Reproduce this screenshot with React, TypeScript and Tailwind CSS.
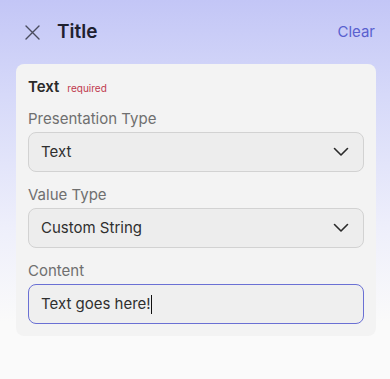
import React from 'react';

const Chevron = () => (
  <svg width="16" height="16" viewBox="0 0 16 16" fill="none" className="text-[#2a2a2a]">
    <path d="M1.5 4.5 8 11l6.5-6.5" stroke="currentColor" strokeWidth="1.6" strokeLinecap="round" strokeLinejoin="round" />
  </svg>
);

const Field: React.FC<{ label: string; children: React.ReactNode }> = ({ label, children }) => (
  <div className="mt-3">
    <div className="h-5 leading-5 text-[15px] text-[#6f6f6f] mb-1 pt-px">{label}</div>
    {children}
  </div>
);

const Select: React.FC<{ value: string }> = ({ value }) => (
  <div className="h-10 rounded-lg border border-[#d2d2d2] bg-[#ededed] flex items-center justify-between pl-3 pr-3.5">
    <span className="text-[15px] text-[#2f2f2f]">{value}</span>
    <Chevron />
  </div>
);

export default function App() {
  return (
    <div
      className="w-[390px] h-[379px] bg-[linear-gradient(180deg,#c3c6f6_0%,#d6d9f9_25%,#eeeffb_60%,#fafafa_85%)] overflow-hidden"
      style={{ fontFamily: 'Inter, "Noto Sans", sans-serif' }}
    >
      <header className="h-16 flex items-center justify-between pl-5 pr-[15px]">
        <div className="flex items-center">
          <div className="w-6 h-6 flex items-center justify-center text-[#4a4c5e]">
            <svg width="15" height="15" viewBox="0 0 15 15" fill="none">
              <path d="M1 1l13 13M14 1 1 14" stroke="currentColor" strokeWidth="1.4" strokeLinecap="round" />
            </svg>
          </div>
          <h1 className="ml-[13px] text-[19px] font-semibold text-[#1f2130]">Title</h1>
        </div>
        <button className="text-[15px] text-[#5a61cf]">Clear</button>
      </header>

      <div className="ml-4 mr-[14px] rounded-lg bg-[#f3f3f3] p-3">
        <div className="h-5 flex items-baseline gap-2">
          <span className="text-[15px] font-semibold text-[#2a2a2a]">Text</span>
          <span className="text-[10px] text-[#c0394d]">required</span>
        </div>

        <Field label="Presentation Type">
          <Select value="Text" />
        </Field>

        <Field label="Value Type">
          <Select value="Custom String" />
        </Field>

        <Field label="Content">
          <div className="h-10 rounded-lg border border-[#6a70d4] bg-[#efefef] flex items-center px-3">
            <span className="text-[15px] text-[#2f2f2f]">Text goes here!</span>
            <span className="w-px h-[19px] bg-[#111]" />
          </div>
        </Field>
      </div>
    </div>
  );
}
